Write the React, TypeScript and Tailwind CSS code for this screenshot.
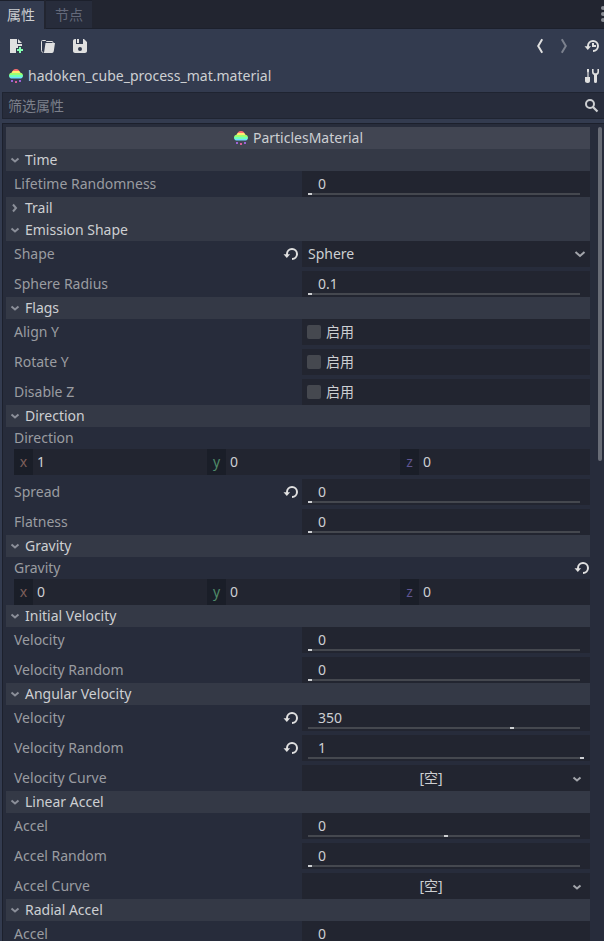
import { useId, useState } from 'react';
import type { ReactNode } from 'react';

type Property =
  | { kind: 'number'; label: string; value: string; min?: number; max?: number; revert?: boolean }
  | { kind: 'select'; label: string; value: string; revert?: boolean }
  | { kind: 'check'; label: string }
  | { kind: 'curve'; label: string }
  | { kind: 'vector'; label: string; value: [string, string, string]; revert?: boolean };

interface Section {
  title: string;
  open: boolean;
  properties: Property[];
}

const SECTIONS: Section[] = [
  {
    title: 'Time',
    open: true,
    properties: [{ kind: 'number', label: 'Lifetime Randomness', value: '0' }],
  },
  { title: 'Trail', open: false, properties: [] },
  {
    title: 'Emission Shape',
    open: true,
    properties: [
      { kind: 'select', label: 'Shape', value: 'Sphere', revert: true },
      { kind: 'number', label: 'Sphere Radius', value: '0.1', max: 128 },
    ],
  },
  {
    title: 'Flags',
    open: true,
    properties: [
      { kind: 'check', label: 'Align Y' },
      { kind: 'check', label: 'Rotate Y' },
      { kind: 'check', label: 'Disable Z' },
    ],
  },
  {
    title: 'Direction',
    open: true,
    properties: [
      { kind: 'vector', label: 'Direction', value: ['1', '0', '0'] },
      { kind: 'number', label: 'Spread', value: '0', max: 180, revert: true },
      { kind: 'number', label: 'Flatness', value: '0' },
    ],
  },
  {
    title: 'Gravity',
    open: true,
    properties: [{ kind: 'vector', label: 'Gravity', value: ['0', '0', '0'], revert: true }],
  },
  {
    title: 'Initial Velocity',
    open: true,
    properties: [
      { kind: 'number', label: 'Velocity', value: '0', max: 1000 },
      { kind: 'number', label: 'Velocity Random', value: '0' },
    ],
  },
  {
    title: 'Angular Velocity',
    open: true,
    properties: [
      { kind: 'number', label: 'Velocity', value: '350', min: -720, max: 720, revert: true },
      { kind: 'number', label: 'Velocity Random', value: '1', revert: true },
      { kind: 'curve', label: 'Velocity Curve' },
    ],
  },
  {
    title: 'Linear Accel',
    open: true,
    properties: [
      { kind: 'number', label: 'Accel', value: '0', min: -100, max: 100 },
      { kind: 'number', label: 'Accel Random', value: '0' },
      { kind: 'curve', label: 'Accel Curve' },
    ],
  },
  {
    title: 'Radial Accel',
    open: true,
    properties: [{ kind: 'number', label: 'Accel', value: '0', min: -100, max: 100 }],
  },
];

const AXES = [
  { name: 'x', color: 'text-[#7d5f5a]' },
  { name: 'y', color: 'text-[#4f8a69]' },
  { name: 'z', color: 'text-[#5f5590]' },
];

function Icon({ children, className = '' }: { children: ReactNode; className?: string }) {
  return (
    <svg width="16" height="16" viewBox="0 0 16 16" fill="#e0e0e0" className={`shrink-0 ${className}`} aria-hidden="true">
      {children}
    </svg>
  );
}

function ParticlesIcon() {
  const clipId = useId();
  return (
    <Icon>
      <clipPath id={clipId}>
        <path d="M8 1C5.8 1 4.3 2.6 3.8 4.6C2.2 4.9 1 6.1 1 7.7C1 9.4 2.300 10.600 4 10.600H12C13.700 10.600 15 9.400 15 7.700C15 6.100 13.800 4.900 12.200 4.600C11.700 2.600 10.200 1 8 1Z" />
      </clipPath>
      <g clipPath={`url(#${clipId})`}>
        <path fill="#ff7070" d="M0 1h16v2H0z" />
        <path fill="#ffeb70" d="M0 3h16v2H0z" />
        <path fill="#9dff70" d="M0 5h16v2H0z" />
        <path fill="#70ffb9" d="M0 7h16v2H0z" />
        <path fill="#70deff" d="M0 9h16v2H0z" />
      </g>
      <path fill="#9c63d6" d="M3 12h2v2H3zM11 12h2v2h-2z" />
      <path fill="#d65f98" d="M7 13h2v2H7z" />
    </Icon>
  );
}

function RevertIcon() {
  return (
    <Icon>
      <path fill="none" stroke="#e0e0e0" strokeWidth="2" d="M4 9V8a5 5 0 1 1 5 5" />
      <path d="M.5 8.2h6.6L3.8 12z" />
    </Icon>
  );
}

function Chevron({ open }: { open: boolean }) {
  return (
    <svg width="10" height="10" viewBox="0 0 10 10" fill="none" stroke="#8b8f99" strokeWidth="2" aria-hidden="true">
      <path d={open ? 'M1.5 3.5L5 6.5L8.5 3.5' : 'M3 1.5L6 5L3 8.5'} />
    </svg>
  );
}

function RevertButton({ label }: { label: string }) {
  return (
    <button type="button" aria-label={`Revert ${label}`}>
      <RevertIcon />
    </button>
  );
}

function NumberField({ id, value, min = 0, max = 1 }: { id: string; value: string; min?: number; max?: number }) {
  const [current, setCurrent] = useState(value);
  return (
    <div className="grid h-full">
      <input
        id={id}
        value={current}
        onChange={(e) => setCurrent(e.target.value)}
        className="col-start-1 row-start-1 w-full bg-transparent px-4 text-[#cdcfd2] outline-none"
      />
      <input
        type="range"
        aria-labelledby={`${id}-label`}
        min={min}
        max={max}
        step="any"
        value={Number(current) || 0}
        onChange={(e) => setCurrent(String(Number(Number(e.target.value).toFixed(2))))}
        className="col-start-1 row-start-1 mx-1.5 mb-0.5 h-0.5 appearance-none self-end bg-transparent bg-linear-to-r from-[#45484f] to-[#45484f] bg-[length:calc(100%-4px)_100%] bg-no-repeat [&::-webkit-slider-thumb]:h-0.5 [&::-webkit-slider-thumb]:w-1 [&::-webkit-slider-thumb]:appearance-none [&::-webkit-slider-thumb]:bg-[#cdcfd2]"
      />
    </div>
  );
}

function VectorRow({ property }: { property: Extract<Property, { kind: 'vector' }> }) {
  const id = useId();
  return (
    <div role="group" aria-label={property.label}>
      <div className="flex h-[22px] items-center justify-between pl-2">
        <span>{property.label}</span>
        {property.revert && <RevertButton label={property.label} />}
      </div>
      <div className="ml-2 grid h-[26px] grid-cols-[193fr_193fr_190fr] bg-[#222530]">
        {AXES.map((axis, i) => (
          <div key={axis.name} className="flex min-w-0">
            <label
              htmlFor={`${id}-${axis.name}`}
              className={`flex w-[19px] shrink-0 items-center justify-center bg-[#1a1e28] ${axis.color}`}
            >
              {axis.name}
            </label>
            <input
              id={`${id}-${axis.name}`}
              defaultValue={property.value[i]}
              className="w-full min-w-0 bg-transparent px-1 text-[#cdcfd2] outline-none"
            />
          </div>
        ))}
      </div>
    </div>
  );
}

function PropertyRow({ property }: { property: Property }) {
  const id = useId();

  if (property.kind === 'vector') return <VectorRow property={property} />;

  return (
    <div className="grid h-[26px] grid-cols-2 gap-2">
      <div className="-mr-[5px] flex items-center justify-between pl-2">
        <label id={`${id}-label`} htmlFor={id}>
          {property.label}
        </label>
        {'revert' in property && property.revert && <RevertButton label={property.label} />}
      </div>
      <div className="min-w-0 bg-[#222530] text-[#cdcfd2]">
        {property.kind === 'number' && (
          <NumberField id={id} value={property.value} min={property.min} max={property.max} />
        )}
        {property.kind === 'select' && (
          <div className="grid h-full items-center">
            <select id={id} className="col-start-1 row-start-1 h-full w-full appearance-none bg-transparent px-1.5">
              <option>{property.value}</option>
            </select>
            <svg
              width="12"
              height="12"
              viewBox="0 0 12 12"
              fill="none"
              stroke="#a3a5ab"
              strokeWidth="2"
              className="pointer-events-none col-start-1 row-start-1 mr-1 justify-self-end"
              aria-hidden="true"
            >
              <path d="M1.5 4L6 8L10.5 4" />
            </svg>
          </div>
        )}
        {property.kind === 'check' && (
          <label className="flex h-full items-center gap-[5px] px-[5px]">
            <input
              id={id}
              type="checkbox"
              className="size-3.5 appearance-none rounded-xs bg-[#45484f] checked:bg-[#699ce8]"
            />
            启用
          </label>
        )}
        {property.kind === 'curve' && (
          <div className="flex h-full">
            <button id={id} type="button" className="flex-1">
              [空]
            </button>
            <button type="button" aria-label={`${property.label} menu`} className="flex w-[30px] items-center pl-3">
              <svg width="10" height="10" viewBox="0 0 10 10" fill="none" stroke="#a3a5ab" strokeWidth="2" aria-hidden="true">
                <path d="M1.5 4.5L5 7.5L8.5 4.5" />
              </svg>
            </button>
          </div>
        )}
      </div>
    </div>
  );
}

function SectionBlock({ section }: { section: Section }) {
  const [open, setOpen] = useState(section.open);
  return (
    <section>
      <button
        type="button"
        aria-expanded={open}
        onClick={() => setOpen(!open)}
        className="flex h-[22px] w-full items-center gap-[5px] bg-[#343946] pl-1 text-[#cdcfd2]"
      >
        <Chevron open={open} />
        {section.title}
      </button>
      {open && (
        <div className="flex flex-col gap-1">
          {section.properties.map((property) => (
            <PropertyRow key={property.label} property={property} />
          ))}
        </div>
      )}
    </section>
  );
}

function Toolbar() {
  return (
    <div className="flex h-[34px] items-center justify-between pr-1 pl-2">
      <div className="flex gap-4">
        <button type="button" aria-label="New resource">
          <Icon>
            <path d="M2 1v14h6v-2V10h2V8h4V6H9V1zM10 1v4h4z" />
            <path fill="#84ffb1" d="M11 9v2H9v2h2v2h2v-2h2v-2h-2V9z" />
          </Icon>
        </button>
        <button type="button" aria-label="Load resource">
          <Icon>
            <path
              fill="none"
              stroke="#e0e0e0"
              d="M3 14.2C2 14.2 1.5 13.5 1.5 12.5V3.5a1 1 0 0 1 1-1H5.5L6.5 3.5H12a1 1 0 0 1 1 1V5"
            />
            <path d="M5.5 5H15L13.8 13C13.6 14.3 13 15 12 15H3C4 15 4.2 14 4.3 13z" />
          </Icon>
        </button>
        <button type="button" aria-label="Save resource">
          <Icon>
            <path
              fillRule="evenodd"
              d="M3 1C1.9 1 1 1.9 1 3v10c0 1.1.9 2 2 2h10c1.1 0 2-.9 2-2V4l-3-3h-1v5H4V1zM5 1v4h2V1zM8 9a2 2 0 1 1 0 4a2 2 0 0 1 0-4z"
            />
          </Icon>
        </button>
      </div>
      <div className="flex items-center gap-2">
        <button type="button" aria-label="Previous object">
          <Icon>
            <path fill="none" stroke="#e0e0e0" strokeWidth="2" d="M10.2 1.2L6.200 8l4 6.800" />
          </Icon>
        </button>
        <button type="button" aria-label="Next object">
          <Icon>
            <path fill="none" stroke="#7c818e" strokeWidth="2" d="M5.8 1.2L9.800 8l-4 6.800" />
          </Icon>
        </button>
        <button type="button" aria-label="Object history" className="ml-1">
          <Icon>
            <path fill="none" stroke="#e0e0e0" strokeWidth="2" d="M4 9V8a5 5 0 1 1 5 5" />
            <path d="M.5 8.2h6.6L3.8 12zM8 5h2v2h2v2H8z" />
          </Icon>
        </button>
      </div>
    </div>
  );
}

export default function App() {
  return (
    <div className="flex h-screen flex-col overflow-hidden bg-[#333b4f] font-['Noto_Sans','Noto_Sans_CJK_SC',sans-serif] text-sm text-[#9a9ca1]">
      {/* Dock tabs */}
      <div className="flex h-[29px] shrink-0 justify-between overflow-hidden bg-[#222530]">
        <div role="tablist" className="flex gap-0.5">
          <button role="tab" type="button" aria-selected="true" className="h-[29px] w-11 border-t border-[#1c202c] bg-[#333b4f] pr-0.5 text-[#cdcfd2]">
            属性
          </button>
          <button role="tab" type="button" aria-selected="false" className="h-[29px] w-[46px] border-y border-[#1c202c] bg-[#272c3b] text-[#64697a]">
            节点
          </button>
        </div>
        <div className="flex flex-1 justify-end border-b border-[#1c202c]">
          <button type="button" aria-label="Dock options" className="-mr-1.5">
            <Icon className="fill-[#8a8d95]">
              <circle cx="9" cy="2" r="2" />
              <circle cx="9" cy="8" r="2" />
              <circle cx="9" cy="14" r="2" />
            </Icon>
          </button>
        </div>
      </div>

      <Toolbar />

      {/* Edited object */}
      <div className="flex h-[26px] shrink-0 items-center justify-between pr-1 pl-2">
        <div className="flex items-center gap-1 text-[#cdcfd2]">
          <ParticlesIcon />
          hadoken_cube_process_mat.material
        </div>
        <button type="button" aria-label="Object tools">
          <Icon>
            <path d="M3 1h2v2.500L4.600 4.500V9H6v4c0 1.300-.8 2-2 2h-.5C2 15 1 14.300 1 13V9h2.400V4.500L3 3.500z" />
            <path d="M8 1v3c0 1.500.8 2.600 2 3v6.500a1.500 1.500 0 0 0 3 0V7c1.200-.4 2-1.500 2-3V1h-1.600v3.200L12.400 5.300h-1.800L9.600 4.200V1z" />
          </Icon>
        </button>
      </div>

      {/* Property filter */}
      <div className="mt-[3px] ml-0.5 flex h-[27px] shrink-0 items-center border border-r-0 border-[#1f2431] bg-[#272c3b] pr-1">
        <input
          aria-label="筛选属性"
          placeholder="筛选属性"
          className="min-w-0 flex-1 bg-transparent px-[5px] outline-none placeholder:text-[#7c808b]"
        />
        <Icon>
          <circle cx="6" cy="6" r="4" fill="none" stroke="#cdcfd2" strokeWidth="2" />
          <path stroke="#cdcfd2" strokeWidth="2.2" d="M9 9L13.500 13.500" />
        </Icon>
      </div>

      {/* Inspector */}
      <div className="mt-1 ml-0.5 flex min-h-0 flex-1 border-t border-l border-[#1c202c] bg-[#272c3b] pt-[3px] pr-0.5 pl-[3px]">
        <div className="min-w-0 flex-1 overflow-y-auto [scrollbar-width:none]">
          <h2 className="flex h-[22px] items-center justify-center gap-1 bg-[#414552] text-[#cdcfd2]">
            <ParticlesIcon />
            ParticlesMaterial
          </h2>
          {SECTIONS.map((section) => (
            <SectionBlock key={section.title} section={section} />
          ))}
        </div>
        <div className="ml-2 h-[41%] w-1 rounded-full bg-[#686c76]" />
      </div>
    </div>
  );
}
